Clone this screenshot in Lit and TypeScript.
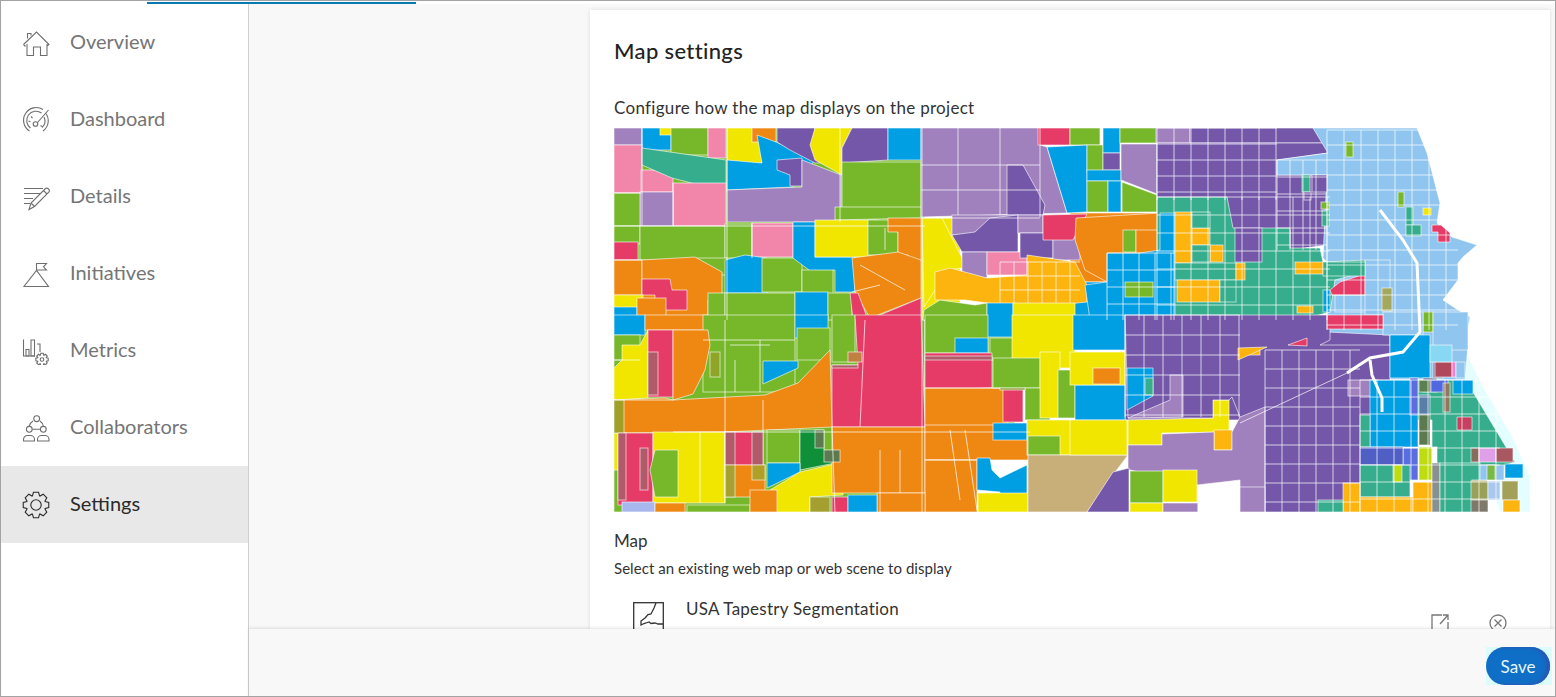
import { LitElement, html, css, svg } from "lit";
import { customElement } from "lit/decorators.js";

// map palette
const P = "#7457a8", L = "#a080bd", B = "#009fe3", G = "#76b82a", Y = "#f0e600", O = "#ee8812";
const A = "#fdb40f", R = "#e63b66", K = "#f285aa", T = "#36ad8c", S = "#8fc5ee", N = "#c8ae78";

type Region = [string, number, number, number, number] | [string, string];

// painter's order, coordinates are page pixels (viewBox matches)
const REGIONS: Region[] = [
  // underlays so no gaps show between the blocks
  ["#e4fdff", "1465,350 1482,385 1512,436 1530,476 1530,512 1500,512 1465,400"],
  [G, 614, 128, 925, 512], [Y, 922, 218, 960, 320], [G, 925, 320, 1015, 425], [O, 1070, 213, 1160, 282],
  [B, 1070, 282, 1175, 320], [P, 1125, 315, 1390, 420], [P, 1265, 420, 1360, 512],
  // north west
  [L, 614, 128, 642, 145], [B, 642, 128, 671, 150], [Y, 660, 128, 675, 135], [G, 671, 128, 708, 155],
  [K, 708, 128, 726, 158], [Y, "727,128 752,128 760,145 762,163 742,164 727,160"], [O, 752, 128, 776, 142],
  [B, "757,135 776,142 815,160 793,187 727,190 727,160 762,163"],
  [P, "777,128 815,128 812,150 818,160 840,162 815,163 790,150 777,142"],
  [Y, "815,128 852,128 842,148 842,175 815,160 810,145"],
  [P, "852,128 888,128 888,160 842,163 842,148"], [B, 888, 128, 921, 160],
  [K, 614, 145, 642, 193], [K, 641, 170, 673, 192],
  [T, "642,148 726,160 726,192 672,178 642,165"],
  [P, "777,160 802,158 802,186 790,186 790,175 777,170"],
  [L, "802,160 841,175 841,222 727,222 727,190 802,187"],
  [G, 842, 162, 921, 218], [G, "835,207 921,207 921,218 835,220"],
  [K, 673, 183, 726, 226], [L, 640, 192, 673, 226], [G, 614, 193, 640, 226],
  [G, 614, 226, 640, 244], [G, 640, 226, 725, 260], [G, 725, 224, 752, 258], [G, 697, 258, 727, 275],
  [K, 752, 223, 793, 257], [R, 614, 242, 638, 260],
  [O, 614, 260, 642, 295], [O, "642,260 695,257 722,272 722,293 708,300 708,320 642,320"],
  [R, "642,279 670,279 672,290 687,290 687,310 655,310 655,295 642,295"],
  [Y, 614, 295, 643, 310], [B, 614, 307, 637, 320], [O, 637, 298, 666, 320],
  [G, 708, 293, 725, 320], [B, "725,260 745,255 767,258 767,293 725,293"],
  [G, 762, 258, 802, 292], [G, 725, 293, 795, 320],
  [B, "793,222 815,222 815,257 855,257 855,292 835,292 835,270 813,273 793,258"],
  [G, 802, 270, 833, 300], [B, 795, 292, 828, 320], [G, 828, 293, 852, 320],
  [Y, 815, 220, 878, 257], [G, "868,220 908,220 908,232 898,232 898,255 868,255"],
  [O, "888,218 921,218 921,290 908,255 898,255 898,232 888,232"],
  [O, "852,258 898,252 921,260 921,298 870,318 855,292"],
  [R, "850,293 858,293 868,320 853,320"], [R, "868,320 921,298 921,320"],
  // north middle
  [L, "921,128 1040,128 1040,145 1047,147 1067,213 921,217"], [R, 1038, 128, 1070, 145], [G, 1070, 128, 1100, 145],
  [B, "1047,147 1087,145 1087,212 1067,213"],
  [P, "1007,165 1023,165 1045,205 1043,215 1007,215"],
  [Y, "922,218 942,218 950,234 962,258 963,268 945,270 935,290 924,307"],
  [L, 952, 215, 1018, 235], [P, "952,235 975,232 990,218 1018,215 1018,252 962,252"],
  [L, 962, 252, 987, 278], [K, 987, 252, 1027, 275], [L, 1018, 215, 1043, 233],
  [P, 1020, 233, 1053, 258], [L, 1053, 238, 1080, 260], [R, "1043,215 1087,214 1073,240 1043,240"],
  [A, "935,272 950,268 987,278 1027,275 1027,255 1075,262 1087,285 1087,302 1030,308 987,303 965,300 935,300"],
  [G, "924,310 940,300 975,305 987,303 987,320 923,320"],
  [B, 987, 303, 1013, 337], [Y, "1013,303 1075,303 1075,352 1013,352"],
  [O, "1076,218 1160,213 1160,252 1140,262 1107,282 1085,270 1075,240"],
  [G, 1087, 145, 1103, 172], [B, 1103, 128, 1120, 153], [P, 1103, 153, 1120, 170], [B, 1087, 170, 1121, 181],
  [G, 1087, 181, 1108, 212], [B, 1108, 181, 1121, 212],
  [L, 1121, 128, 1190, 143], [G, 1120, 128, 1156, 143], [L, "1121,144 1157,144 1157,194 1121,180"],
  [G, "1122,182 1157,195 1157,212 1122,212"],
  [G, 1123, 230, 1136, 252], [O, 1136, 230, 1158, 260],
  // purple north
  [P, 1190, 128, 1330, 143], [P, "1157,143 1327,143 1328,153 1277,160 1277,175 1327,175 1327,245 1290,250 1290,230 1227,230 1157,197"],
  // lake side, sky blue
  [S, "1313,128 1417,128 1427,153 1440,203 1437,223 1452,237 1477,245 1463,257 1458,263 1458,280 1443,300 1458,310 1470,317 1466,340 1468,345 1465,380 1390,380 1390,335 1327,332 1327,262 1323,258 1327,175 1277,175 1277,160 1328,153"],
  [G, 1346, 142, 1353, 157], [T, 1302, 175, 1310, 192], [P, 1312, 175, 1327, 192], [P, 1304, 192, 1311, 200],
  [G, 1398, 192, 1404, 207], [T, 1406, 207, 1413, 225], [T, 1406, 225, 1421, 236], [Y, 1423, 208, 1431, 215],
  [R, "1432,225 1441,225 1450,233 1450,242 1438,242 1438,232 1432,232"],
  [G, 1321, 202, 1329, 209], [T, 1322, 210, 1329, 226],
  // teal middle
  [T, "1157,197 1227,197 1233,228 1290,228 1290,248 1320,248 1323,262 1365,260 1365,272 1335,280 1330,312 1300,320 1236,330 1235,320 1175,320 1157,320"],
  [P, 1235, 228, 1262, 262],
  [B, "1160,213 1175,213 1175,320 1090,320 1085,285 1107,282 1107,253 1140,253 1160,250"],
  [A, 1175, 212, 1192, 263], [A, 1192, 228, 1210, 245], [A, 1210, 245, 1223, 262],
  [T, 1192, 212, 1210, 228], [T, 1192, 245, 1210, 262], [T, 1175, 263, 1236, 280],
  [A, 1177, 280, 1220, 302], [T, 1220, 280, 1236, 302], [A, 1236, 263, 1245, 280],
  [A, 1295, 262, 1323, 274], [A, 1297, 306, 1313, 313], [G, 1125, 282, 1153, 297],
  [B, 1323, 290, 1330, 312], [S, 1335, 295, 1383, 312], [R, "1330,290 1340,282 1365,274 1365,295 1332,295"],
  [S, 1365, 260, 1390, 315], [G, 1423, 312, 1433, 332], [S, 1383, 312, 1423, 335], [S, 1433, 312, 1468, 350],
  ["#a3a85c", 1382, 288, 1392, 311], [T, 1323, 262, 1365, 276],
  // west row 3
  [B, 614, 315, 645, 335], [O, 645, 315, 708, 330], [G, 703, 315, 795, 392], [B, 795, 315, 828, 338],
  [G, 797, 328, 830, 360], [G, 832, 315, 855, 362], [G, 925, 315, 988, 353], [B, 955, 338, 988, 353],
  [G, 990, 338, 1015, 360], [G, 614, 335, 640, 360],
  [Y, "622,345 640,345 648,330 648,398 614,400 614,368 622,360"], [R, 648, 330, 673, 397],
  [O, "673,330 708,330 710,345 705,370 693,394 673,400"],
  [B, "763,361 798,361 798,368 763,384"], [R, "855,315 921,315 925,427 832,427 832,365 858,365"],
  [R, "925,353 992,353 992,388 925,390"], [O, "925,388 1003,388 1008,425 925,427"],
  [R, 1003, 387, 1023, 422], [Y, 1012, 315, 1075, 368],
  [G, 993, 358, 1040, 388], [G, 1025, 388, 1050, 420], [Y, 1040, 352, 1060, 418], [G, 1058, 370, 1075, 418],
  [B, 1075, 385, 1125, 420], [Y, 1070, 352, 1125, 385], [B, 1073, 315, 1125, 350], [O, 1093, 368, 1120, 384],
  [O, "614,400 665,398 673,400 765,395 798,383 830,350 832,427 725,432 614,433"],
  [Y, 614, 433, 618, 470], [R, 618, 433, 653, 505], [Y, 653, 432, 725, 503], [G, "655,450 678,450 678,497 655,497 650,470"],
  [R, 725, 432, 763, 465], [O, 725, 465, 765, 497], [G, 767, 430, 800, 463], ["#0f8f38", "800,430 824,430 824,450 840,452 840,462 800,470"],
  [B, "767,463 800,463 800,472 767,488"], [Y, "770,490 800,472 843,462 843,495 810,497 810,512 773,512"],
  [O, 832, 427, 925, 493], [O, 925, 425, 1030, 460], [O, 925, 460, 977, 512], [O, 877, 493, 925, 512],
  [B, "977,458 990,458 992,470 1000,478 1027,465 1027,503 1000,503 1000,492 977,490"],
  [B, 993, 423, 1027, 440], [Y, 978, 493, 1028, 512], [Y, 1027, 420, 1075, 455],
  [G, 1028, 436, 1060, 455],
  ["#a8b8ee", 622, 502, 655, 512], [O, 655, 503, 685, 512], [G, 687, 505, 750, 512], [O, 750, 490, 777, 512],
  ["#a3a030", 810, 497, 830, 512], [R, 832, 497, 848, 512], [B, 848, 495, 877, 512],
  // south middle
  [N, "1028,455 1128,455 1113,475 1087,512 1028,512"],
  [Y, 1070, 420, 1127, 455], [Y, "1128,420 1213,418 1213,400 1229,400 1229,432 1162,433 1162,445 1128,445"],
  [A, 1214, 430, 1232, 450],
  [P, "1125,315 1330,315 1330,340 1320,345 1390,345 1390,512 1240,512 1240,417 1232,397 1229,400 1213,400 1213,418 1128,418"],
  [L, "1128,445 1162,445 1162,434 1214,432 1214,450 1232,450 1232,432 1240,417 1265,407 1265,512 1240,512 1240,480 1197,485 1130,470 1128,470"],
  [L, "1128,418 1170,400 1170,375 1183,375 1183,417"],
  [P, "1087,512 1113,472 1129,468 1129,512"], [G, 1130, 471, 1163, 503], [Y, 1163, 470, 1197, 502],
  [Y, 1130, 503, 1163, 512], [L, 1163, 503, 1198, 512], ["#ffffff", 1198, 487, 1240, 512],
  [L, 1240, 487, 1265, 512], [A, 1239, 350, 1260, 355],
  [A, "1238,348 1267,347 1238,360"], [R, "1288,345 1307,338 1307,346"], [R, 1327, 315, 1383, 329],
  [B, "1127,368 1153,368 1153,396 1127,410"], [T, 1145, 378, 1153, 395], [L, 1348, 380, 1378, 396],
  // south east mix
  [T, "1390,380 1465,380 1473,392 1503,442 1515,462 1490,470 1432,470 1432,420 1390,420"],
  [B, "1390,335 1430,335 1430,378 1390,378"], [B, 1370, 380, 1418, 447], [T, 1360, 415, 1370, 447],
  ["#5a6ee0", 1403, 448, 1418, 480], ["#bedc10", 1419, 447, 1432, 480], ["#4f5fc4", 1360, 447, 1403, 465],
  [T, 1360, 465, 1410, 497], ["#bedc10", 1393, 465, 1402, 482], [A, 1343, 483, 1360, 512], [A, 1360, 497, 1413, 512],
  [A, 1413, 482, 1432, 512], ["#ffffff", 1432, 447, 1437, 463],
  ["#8a8f8f", 1432, 463, 1440, 512], [T, 1440, 463, 1480, 512], ["#9aa058", 1472, 480, 1487, 500],
  [T, 1318, 500, 1343, 512], ["#5a6ee0", 1410, 378, 1418, 415], ["#686898", 1423, 378, 1437, 392],
  ["#5c8050", 1419, 380, 1430, 392], ["#5068e0", 1431, 380, 1448, 392], ["#907860", 1443, 383, 1450, 412],
  [B, 1453, 380, 1473, 394], ["#5a7ea8", 1419, 395, 1430, 415], ["#5c7a50", 1419, 415, 1430, 445],
  ["#c84060", "1457,417 1472,417 1472,430 1457,430"], ["#8a7a9a", 1433, 362, 1443, 378],
  ["#b0485c", 1435, 362, 1452, 377], ["#f080d0", 1452, 362, 1456, 377], [S, 1456, 362, 1465, 378],
  ["#88d8f4", 1430, 345, 1452, 362], ["#8a6a5a", 1471, 448, 1479, 462], ["#e0a0e8", 1479, 448, 1496, 462],
  ["#a85860", 1496, 448, 1513, 462], [B, 1505, 464, 1523, 478], [S, 1480, 465, 1504, 480], ["#7ab848", 1487, 465, 1495, 480],
  ["#9aa058", 1471, 481, 1488, 500], ["#a8c8ee", 1488, 481, 1500, 500], ["#a3a058", 1502, 481, 1518, 500],
  [A, 1503, 500, 1520, 512], ["#80786a", 1471, 500, 1488, 512],
  // muddy overlaps seen on the west side
  ["#b05a6a", 648, 352, 658, 395], ["#8fa528", 710, 352, 720, 377], ["#a0a028", 614, 400, 624, 433],
  ["#b05a6a", 618, 433, 626, 500], ["#b05a6a", 640, 448, 648, 490], ["#b05a6a", 725, 432, 735, 465],
  ["#b05a6a", 752, 432, 763, 465], ["#b0a028", 752, 465, 765, 480], ["#b05a6a", 832, 365, 858, 368],
  ["#c08040", 848, 352, 862, 362], ["#b05a6a", 925, 356, 992, 360], ["#a8a030", 725, 465, 735, 497],
  ["#8a9a30", 1000, 388, 1025, 390], ["#5c7a50", 815, 430, 824, 448], ["#5c7a50", 824, 450, 840, 462],
];

const gridPath = (x0: number, y0: number, x1: number, y1: number, dx: number, dy: number) => {
  let d = "";
  for (let x = x0; x <= x1; x += dx) d += `M${x} ${y0}V${y1}`;
  for (let y = y0; y <= y1; y += dy) d += `M${x0} ${y}H${x1}`;
  return d;
};

const STREETS =
  gridPath(1157, 128, 1277, 200, 17, 16) + gridPath(1277, 160, 1327, 250, 13, 17) + gridPath(1327, 130, 1458, 330, 17, 15) +
  gridPath(1125, 315, 1240, 417, 19, 20) + gridPath(1265, 350, 1360, 512, 17, 19) + gridPath(1360, 380, 1500, 512, 17, 17) +
  gridPath(1157, 197, 1330, 320, 17, 18) + gridPath(1107, 253, 1175, 320, 16, 17) + gridPath(1000, 262, 1080, 303, 14, 14);

const WEST_LINES =
  "M922 128V512M614 226H925M840 222V128M642 128V226M673 183V226M727 128V320M725 320V432M752 223V258M614 260H642M642 193H614M921 218H1040" +
  "M1000 128V215M958 128V215M921 165H1040M921 190H1040M1040 128V217M614 400L673 400M673 432H1030M763 400V432M700 432V503M725 432V503" +
  "M865 320L860 427M925 388H1000M832 427L835 512M880 450V512M925 460H977M965 430L977 510M950 430L960 500M900 450V493" +
  "M703 340H795M730 345H770M735 360V392M760 340V392M860 265L905 290M852 292L880 285M640 360H614M885 228V250M1240 423L1347 373";

const gearPath = (cx: number, cy: number, r1: number, r2: number, n: number) => {
  const pts: string[] = [];
  for (let i = 0; i < n; i++) {
    const a = (i / n) * Math.PI * 2;
    const w = Math.PI / n;
    const p = (r: number, t: number) => `${(cx + r * Math.cos(t)).toFixed(2)} ${(cy + r * Math.sin(t)).toFixed(2)}`;
    pts.push(`${i ? "L" : "M"}${p(r2, a - w * 0.95)}L${p(r1, a - w * 0.5)}L${p(r1, a + w * 0.5)}L${p(r2, a + w * 0.95)}`);
  }
  return pts.join("") + "Z";
};

const ICONS: Record<string, unknown> = {
  overview: svg`<path d="M1.5 15.5L14.5 3L27 15.5L25 17M3.5 17.5L1.5 15.5M5.5 9.5V4.5H9V6.5M5 15V26.5H11.5V18H18.5V26.5H25V15"/>`,
  dashboard: svg`<path d="M7.5 25A12.5 12.5 0 0 1 21 3.5M23.5 7A12.5 12.5 0 0 1 21 25"/><path d="M8.5 22A9 9 0 0 1 19.5 7M22 11A9 9 0 0 1 20 21.5"/><circle cx="13.5" cy="18" r="2.3"/><path d="M15.5 16.5L26.5 4M6.5 15l2 .7M9 10.5l1.5 1.5M20 20.5l-1.5-1"/>`,
  details: svg`<path d="M2 5.5H21M2 10.5H18M2 15.5H11M2 20.5H8"/><path d="M7 26.5L9 20L23.5 5.5Q25 4.5 26.5 6Q28 7.5 27 9L12.5 23.5ZM21.5 7.5L25 11M9 20L12.5 23.5"/>`,
  initiatives: svg`<path d="M2 26.5H26.5L14.5 10.5ZM14.5 10.5V3.5H24.5L21.5 6.8L24.5 10H14.5"/>`,
  metrics: svg`<path d="M1.5 2.5V19H13"/><path d="M4 12.5H7V19H4ZM9 3H12.5V19H9ZM15 7H18V15"/><path d="${gearPath(20, 22.5, 6.3, 4.6, 8)}"/><circle cx="20" cy="22.5" r="1.8"/>`,
  collaborators: svg`<circle cx="14.7" cy="4.7" r="2.9"/><circle cx="7.3" cy="15.3" r="2.9"/><circle cx="21.3" cy="15.3" r="2.9"/><path d="M10.5 15.3H18M7.3 12A8 8 0 0 1 11 7M21.3 12A8 8 0 0 0 18 7"/><path d="M1.5 27V25.5A4 4 0 0 1 5.5 21.5H8.5A4 4 0 0 1 12.5 25.5V27ZM15.5 27V25.5A4 4 0 0 1 19.5 21.5H23A4 4 0 0 1 27 25.5V27Z"/>`,
  settings: svg`<path d="${gearPath(14, 14, 13, 9.8, 8)}"/><circle cx="14" cy="14" r="5.2"/>`,
};

const NAV = [
  { id: "overview", label: "Overview" },
  { id: "dashboard", label: "Dashboard" },
  { id: "details", label: "Details" },
  { id: "initiatives", label: "Initiatives" },
  { id: "metrics", label: "Metrics" },
  { id: "collaborators", label: "Collaborators" },
  { id: "settings", label: "Settings", active: true },
];

@customElement("app-root")
export class AppRoot extends LitElement {
  static styles = css`
    :host {
      display: flex;
      flex-direction: column;
      box-sizing: border-box;
      width: 1556px;
      height: 697px;
      border: 1px solid #a3a3a3;
      overflow: hidden;
      background: #fff;
      font-family: Lato, "Open Sans", sans-serif;
      color: #2b2b2b;
    }
    .tabline { height: 3px; flex: none; }
    .tabline div { margin: 1px 0 0 146px; width: 269px; height: 2px; background: #0a79b0; }
    .body { flex: 1; display: flex; min-height: 0; }
    .side {
      width: 247px;
      flex: none;
      border-right: 1px solid #cfcfcf;
      background: #fff;
    }
    .nav-row {
      height: 77px;
      display: flex;
      align-items: center;
      gap: 20px;
      padding-left: 21px;
      font-size: 20px;
      color: #757575;
    }
    .nav-row span { padding-bottom: 3px; }
    .nav-row.active { background: #e8e8e8; color: #2b2b2b; }
    .nav-row svg { width: 28px; height: 28px; fill: none; stroke: #6f6f6f; stroke-width: 1.1; flex: none; }
    .nav-row.active svg { stroke: #2b2b2b; }
    .right { flex: 1; display: flex; flex-direction: column; min-width: 0; background: #f8f8f8; }
    .scroll { flex: 1; min-height: 0; overflow: hidden; padding: 6px 5px 0 341px; }
    .card {
      background: #fff;
      height: 100%;
      box-sizing: border-box;
      padding: 26px 24px 0 24px;
      box-shadow: 0 0 4px rgba(0, 0, 0, 0.12);
    }
    h2 { margin: 0; font-size: 22px; font-weight: 500; line-height: 30px; letter-spacing: 0.35px; color: #222; }
    .sub { margin-top: 30px; font-size: 17px; line-height: 24px; letter-spacing: 0.3px; color: #333; }
    .map { display: block; width: 916px; height: 384px; margin-top: 8px; }
    .label { margin-top: 17px; font-size: 17px; line-height: 24px; color: #333; }
    .hint { margin-top: 6px; font-size: 15px; line-height: 18px; letter-spacing: 0.05px; color: #333; }
    .item {
      display: flex;
      align-items: flex-start;
      margin-top: 20px;
      padding-left: 19px;
    }
    .thumb { width: 31px; height: 40px; flex: none; margin-top: 5px; stroke: #333; fill: none; stroke-width: 1.3; }
    .item-name { margin-left: 22px; flex: 1; font-size: 17px; line-height: 24px; letter-spacing: 0.25px; color: #333; }
    .act { flex: none; fill: none; stroke: #777; stroke-width: 1.3; width: 18px; height: 18px; margin-top: 17px; }
    .act.open { margin-right: 40px; }
    .act.close { margin-right: 19px; }
    footer {
      height: 67px;
      flex: none;
      position: relative;
      display: flex;
      align-items: flex-start;
      justify-content: flex-end;
      padding: 18px 5px 0 0;
      background: #f8f8f8;
      box-shadow: 0 -1px 3px rgba(0, 0, 0, 0.12);
      box-sizing: border-box;
    }
    .save-wrap { background: #dcfcfc; height: 38px; margin-right: -2px; padding-right: 2px; }
    .save {
      display: block;
      width: 64px;
      height: 38px;
      border: 0;
      border-radius: 19px;
      background: #0f6fc6;
      box-shadow: inset -3px 0 4px #2f52b0;
      color: #e6f6ff;
      font: 17px Lato, sans-serif;
      padding: 0;
    }
    .streets { fill: none; stroke: #fff; stroke-opacity: 0.7; stroke-width: 1; }
    .river { fill: none; stroke: #fff; stroke-width: 3; }
    .poly { stroke: #fff; stroke-opacity: 0.6; stroke-width: 1; }
  `;

  renderRegion(r: Region) {
    if (r.length === 2) return svg`<polygon class="poly" fill=${r[0]} points=${r[1]}></polygon>`;
    const [c, x0, y0, x1, y1] = r;
    return svg`<rect class="poly" fill=${c} x=${x0} y=${y0} width=${x1 - x0} height=${y1 - y0}></rect>`;
  }

  render() {
    return html`
      <div class="tabline"><div></div></div>
      <div class="body">
        <nav class="side">
          ${NAV.map(n => html`
            <div class="nav-row ${n.active ? "active" : ""}">
              <svg viewBox="0 0 28 28">${ICONS[n.id]}</svg>
              <span>${n.label}</span>
            </div>
          `)}
        </nav>
        <div class="right">
          <div class="scroll">
            <section class="card">
              <h2>Map settings</h2>
              <div class="sub">Configure how the map displays on the project</div>
              <svg class="map" viewBox="614 128 916 384" preserveAspectRatio="none">
                ${REGIONS.map(r => this.renderRegion(r))}
                <path class="streets" d=${STREETS}></path>
                <path class="streets" d=${WEST_LINES}></path>
                <path class="river" d="M1380 210L1403 240L1417 263L1420 332L1403 352L1370 358L1347 373"></path>
                <path class="river" stroke-width="2" d="M1370 360L1372 375L1382 398L1382 412"></path>
              </svg>
              <div class="label">Map</div>
              <div class="hint">Select an existing web map or web scene to display</div>
              <div class="item">
                <svg class="thumb" viewBox="0 0 31 40">
                  <rect x="0.7" y="0.7" width="29.6" height="38"></rect>
                  <path d="M23 1L21 6L18 12L15 12.5L12 16L8 19L8 23L11 21.5L13 21L16 20L18 21.5L22 21L25 22L30 22"></path>
                </svg>
                <div class="item-name">USA Tapestry Segmentation</div>
                <svg class="act open" viewBox="0 0 18 18">
                  <path d="M11 1H1V17H17V8M9 10L17 1M12 1H17V6"></path>
                </svg>
                <svg class="act close" viewBox="0 0 18 18">
                  <circle cx="9" cy="9" r="8"></circle>
                  <path d="M5.5 5.5L12.5 12.5M12.5 5.5L5.5 12.5"></path>
                </svg>
              </div>
            </section>
          </div>
          <footer><div class="save-wrap"><button class="save">Save</button></div></footer>
        </div>
      </div>
    `;
  }
}
